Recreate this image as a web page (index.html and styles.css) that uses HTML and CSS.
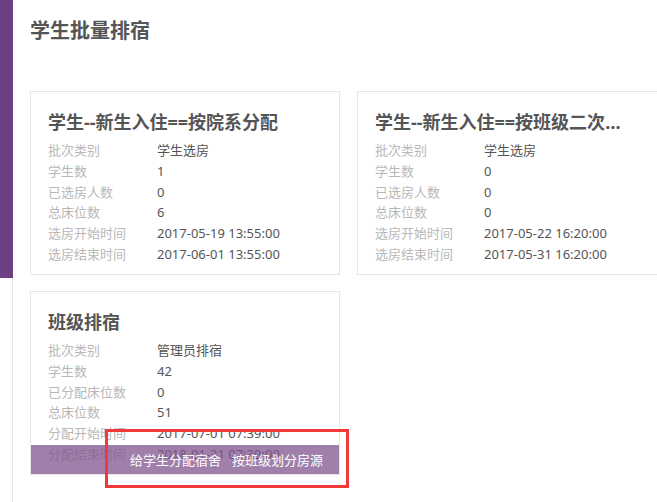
FILE: index.html
```html
<!DOCTYPE html>
<html lang="zh-CN">

<head>
  <meta charset="utf-8">
  <title>学生批量排宿</title>
  <link rel="stylesheet" href="styles.css">
</head>

<body>
  <div class="page">
    <!-- 左侧栏 -->
    <aside class="side">
      <div class="side-top"></div>
    </aside>
    <!-- 主要内容 -->
    <main class="main">
      <h1 class="page-title">学生批量排宿</h1>
      <div class="batch-list">
        <div class="batch">
          <h2 class="batch-title">学生--新生入住==按院系分配</h2>
          <dl class="batch-info">
            <dt>批次类别</dt><dd>学生选房</dd>
            <dt>学生数</dt><dd>1</dd>
            <dt>已选房人数</dt><dd>0</dd>
            <dt>总床位数</dt><dd>6</dd>
            <dt>选房开始时间</dt><dd>2017-05-19 13:55:00</dd>
            <dt>选房结束时间</dt><dd>2017-06-01 13:55:00</dd>
          </dl>
        </div>
        <div class="batch">
          <h2 class="batch-title short">学生--新生入住==按班级二次分配宿舍</h2>
          <dl class="batch-info">
            <dt>批次类别</dt><dd>学生选房</dd>
            <dt>学生数</dt><dd>0</dd>
            <dt>已选房人数</dt><dd>0</dd>
            <dt>总床位数</dt><dd>0</dd>
            <dt>选房开始时间</dt><dd>2017-05-22 16:20:00</dd>
            <dt>选房结束时间</dt><dd>2017-05-31 16:20:00</dd>
          </dl>
        </div>
        <div class="batch">
          <h2 class="batch-title">班级排宿</h2>
          <dl class="batch-info">
            <dt>批次类别</dt><dd>管理员排宿</dd>
            <dt>学生数</dt><dd>42</dd>
            <dt>已分配床位数</dt><dd>0</dd>
            <dt>总床位数</dt><dd>51</dd>
            <dt>分配开始时间</dt><dd>2017-07-01 07:39:00</dd>
            <dt>分配结束时间</dt><dd>2018-01-31 07:39:00</dd>
          </dl>
          <div class="batch-ops">
            <a href="javascript:;">给学生分配宿舍</a>
            <a href="javascript:;">按班级划分房源</a>
          </div>
          <div class="mark"></div>
        </div>
      </div>
    </main>
  </div>
</body>

</html>
```

FILE: styles.css
```css
* {
  padding: 0;
  margin: 0;
  box-sizing: border-box;
}

a {
  text-decoration: none;
  color: inherit;
}

body {
  width: 657px;
  height: 502px;
  overflow: hidden;
  background-color: #fff;
  font-family: "Noto Sans", "Noto Sans CJK SC", sans-serif;
  color: #555;
}

.page {
  display: flex;
  min-height: 502px;
}

/* 左侧栏 */
.side {
  width: 13px;
  flex-shrink: 0;
  border-right: 1px solid #e8e8e8;
}

.side-top {
  width: 13px;
  height: 278px;
  background-color: #6e3f82;
}

.main {
  flex: 1;
  padding-left: 17px;
}

.page-title {
  height: 91px;
  padding-top: 17px;
  line-height: 28px;
  font-size: 20px;
  font-weight: 700;
  color: #555;
}

.batch-list {
  display: grid;
  grid-template-columns: 310px 310px;
  gap: 16px 17px;
}

.batch {
  position: relative;
  height: 184px;
  padding: 18px 18px 8px 17px;
  border: 1px solid #e6e3ea;
}

.batch-title {
  line-height: 24px;
  font-size: 18px;
  font-weight: 700;
  color: #555;
  white-space: nowrap;
  overflow: hidden;
  text-overflow: ellipsis;
}

.batch-title.short {
  width: 246px;
}

.batch-info {
  display: grid;
  grid-template-columns: 109px 1fr;
  margin-top: 6px;
  font-size: 13px;
  line-height: 20.8px;
}

.batch-info dt {
  color: #b8b8b8;
}

.batch-info dd {
  color: #555;
}

/* 操作栏 */
.batch-ops {
  position: absolute;
  left: 0;
  right: 0;
  bottom: 0;
  height: 29px;
  display: flex;
  justify-content: flex-end;
  align-items: center;
  gap: 11px;
  padding-right: 16px;
  background-color: rgba(128, 84, 143, .75);
  color: #fff;
  font-size: 13px;
}

/* 标注框 */
.mark {
  position: absolute;
  left: 74px;
  top: 137px;
  width: 244px;
  height: 59px;
  border: 3px solid #f03a3a;
}
```
